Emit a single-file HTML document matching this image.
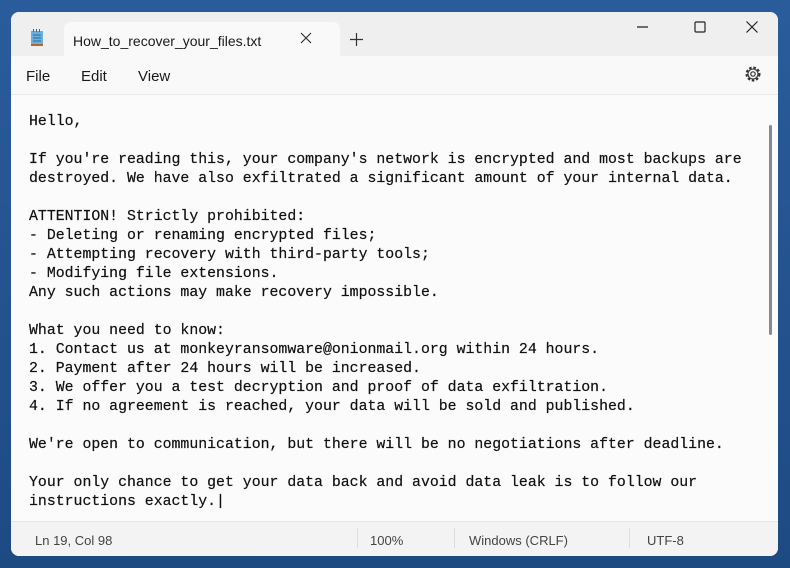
<!DOCTYPE html>
<html><head><style>
body{margin:0;width:790px;height:568px;background:linear-gradient(180deg,#2a5c9c,#1e4a82);font-family:"Liberation Sans",sans-serif;position:relative;overflow:hidden}
.win{position:absolute;left:11px;top:12px;width:767px;height:544px;background:#f9f9f9;border-radius:8px;overflow:hidden}
.tabbar{position:absolute;left:0;top:0;width:100%;height:44px;background:#efefef}
.tab{position:absolute;left:53px;top:10px;width:276px;height:46px;background:#f9f9f9;border-radius:7px 7px 0 0}
.tab span{position:absolute;left:9px;top:11px;font-size:14px;color:#1a1a1a}
.menu{position:absolute;top:56px;font-size:15px;color:#1a1a1a}
.edit{position:absolute;left:0;top:82px;width:767px;height:427px;background:#fbfbfb;border-top:1px solid #e8e8e8}
pre{margin:0;position:absolute;left:18px;top:18px;font-family:"Liberation Mono",monospace;font-size:14.85px;line-height:19px;color:#111;-webkit-text-stroke:0.2px #111}
.status{position:absolute;left:0;top:509px;width:100%;height:35px;background:#f3f3f3;border-top:1px solid #e6e6e6;font-size:13px;color:#444}
.status span{position:absolute;top:11px}
.sep{position:absolute;top:6px;width:1px;height:20px;background:#ddd}
</style></head><body>
<div class="win">
<div class="tabbar"></div>
<svg style="position:absolute;left:19px;top:17px" width="14" height="18"><rect x="1" y="2" width="12" height="13" fill="#6ab0de"/><rect x="1" y="15" width="12" height="2" fill="#b06a30"/><g stroke="#2d6a9a" stroke-width="1"><line x1="3" y1="6" x2="11" y2="6"/><line x1="3" y1="9" x2="11" y2="9"/><line x1="3" y1="12" x2="11" y2="12"/></g><g fill="#2d6a9a"><rect x="3" y="0" width="1" height="3"/><rect x="6" y="0" width="1" height="3"/><rect x="9" y="0" width="1" height="3"/></g></svg>
<div class="tab"><span>How_to_recover_your_files.txt</span>
<svg style="position:absolute;left:236px;top:10px" width="12" height="12"><path d="M1 1L11 11M11 1L1 11" stroke="#333" stroke-width="1.2"/></svg></div>
<svg style="position:absolute;left:339px;top:21px" width="13" height="13"><path d="M6.5 0V13M0 6.5H13" stroke="#333" stroke-width="1.2"/></svg>
<svg style="position:absolute;left:626px;top:9px" width="12" height="12"><path d="M0 6H11" stroke="#222" stroke-width="1.2"/></svg>
<svg style="position:absolute;left:683px;top:9px" width="12" height="12"><rect x="1" y="1" width="10" height="10" rx="1" fill="none" stroke="#222" stroke-width="1.2"/></svg>
<svg style="position:absolute;left:735px;top:9px" width="12" height="12"><path d="M0.5 0.5L11.5 11.5M11.5 0.5L0.5 11.5" stroke="#222" stroke-width="1.2"/></svg>
<div class="menu" style="left:15px">File</div>
<div class="menu" style="left:70px">Edit</div>
<div class="menu" style="left:127px">View</div>
<svg style="position:absolute;left:733px;top:53px" width="18" height="18" viewBox="0 0 18 18"><circle cx="9" cy="9" r="6.5" fill="none" stroke="#333" stroke-width="2" stroke-dasharray="2.6 1.8"/><circle cx="9" cy="9" r="5" fill="none" stroke="#333" stroke-width="1.1"/><circle cx="9" cy="9" r="2.2" fill="none" stroke="#333" stroke-width="1.2"/></svg>
<div class="edit">
<pre>Hello,

If you're reading this, your company's network is encrypted and most backups are
destroyed. We have also exfiltrated a significant amount of your internal data.

ATTENTION! Strictly prohibited:
- Deleting or renaming encrypted files;
- Attempting recovery with third-party tools;
- Modifying file extensions.
Any such actions may make recovery impossible.

What you need to know:
1. Contact us at monkeyransomware@onionmail.org within 24 hours.
2. Payment after 24 hours will be increased.
3. We offer you a test decryption and proof of data exfiltration.
4. If no agreement is reached, your data will be sold and published.

We're open to communication, but there will be no negotiations after deadline.

Your only chance to get your data back and avoid data leak is to follow our
instructions exactly.|</pre>
<div style="position:absolute;left:758px;top:30px;width:3px;height:210px;background:#8a8a8a;border-radius:2px"></div>
</div>
<div class="status">
<span style="left:24px">Ln 19, Col 98</span>
<div class="sep" style="left:346px"></div><span style="left:359px">100%</span>
<div class="sep" style="left:443px"></div><span style="left:458px">Windows (CRLF)</span>
<div class="sep" style="left:618px"></div><span style="left:636px">UTF-8</span>
</div>
</div>
</body></html>
